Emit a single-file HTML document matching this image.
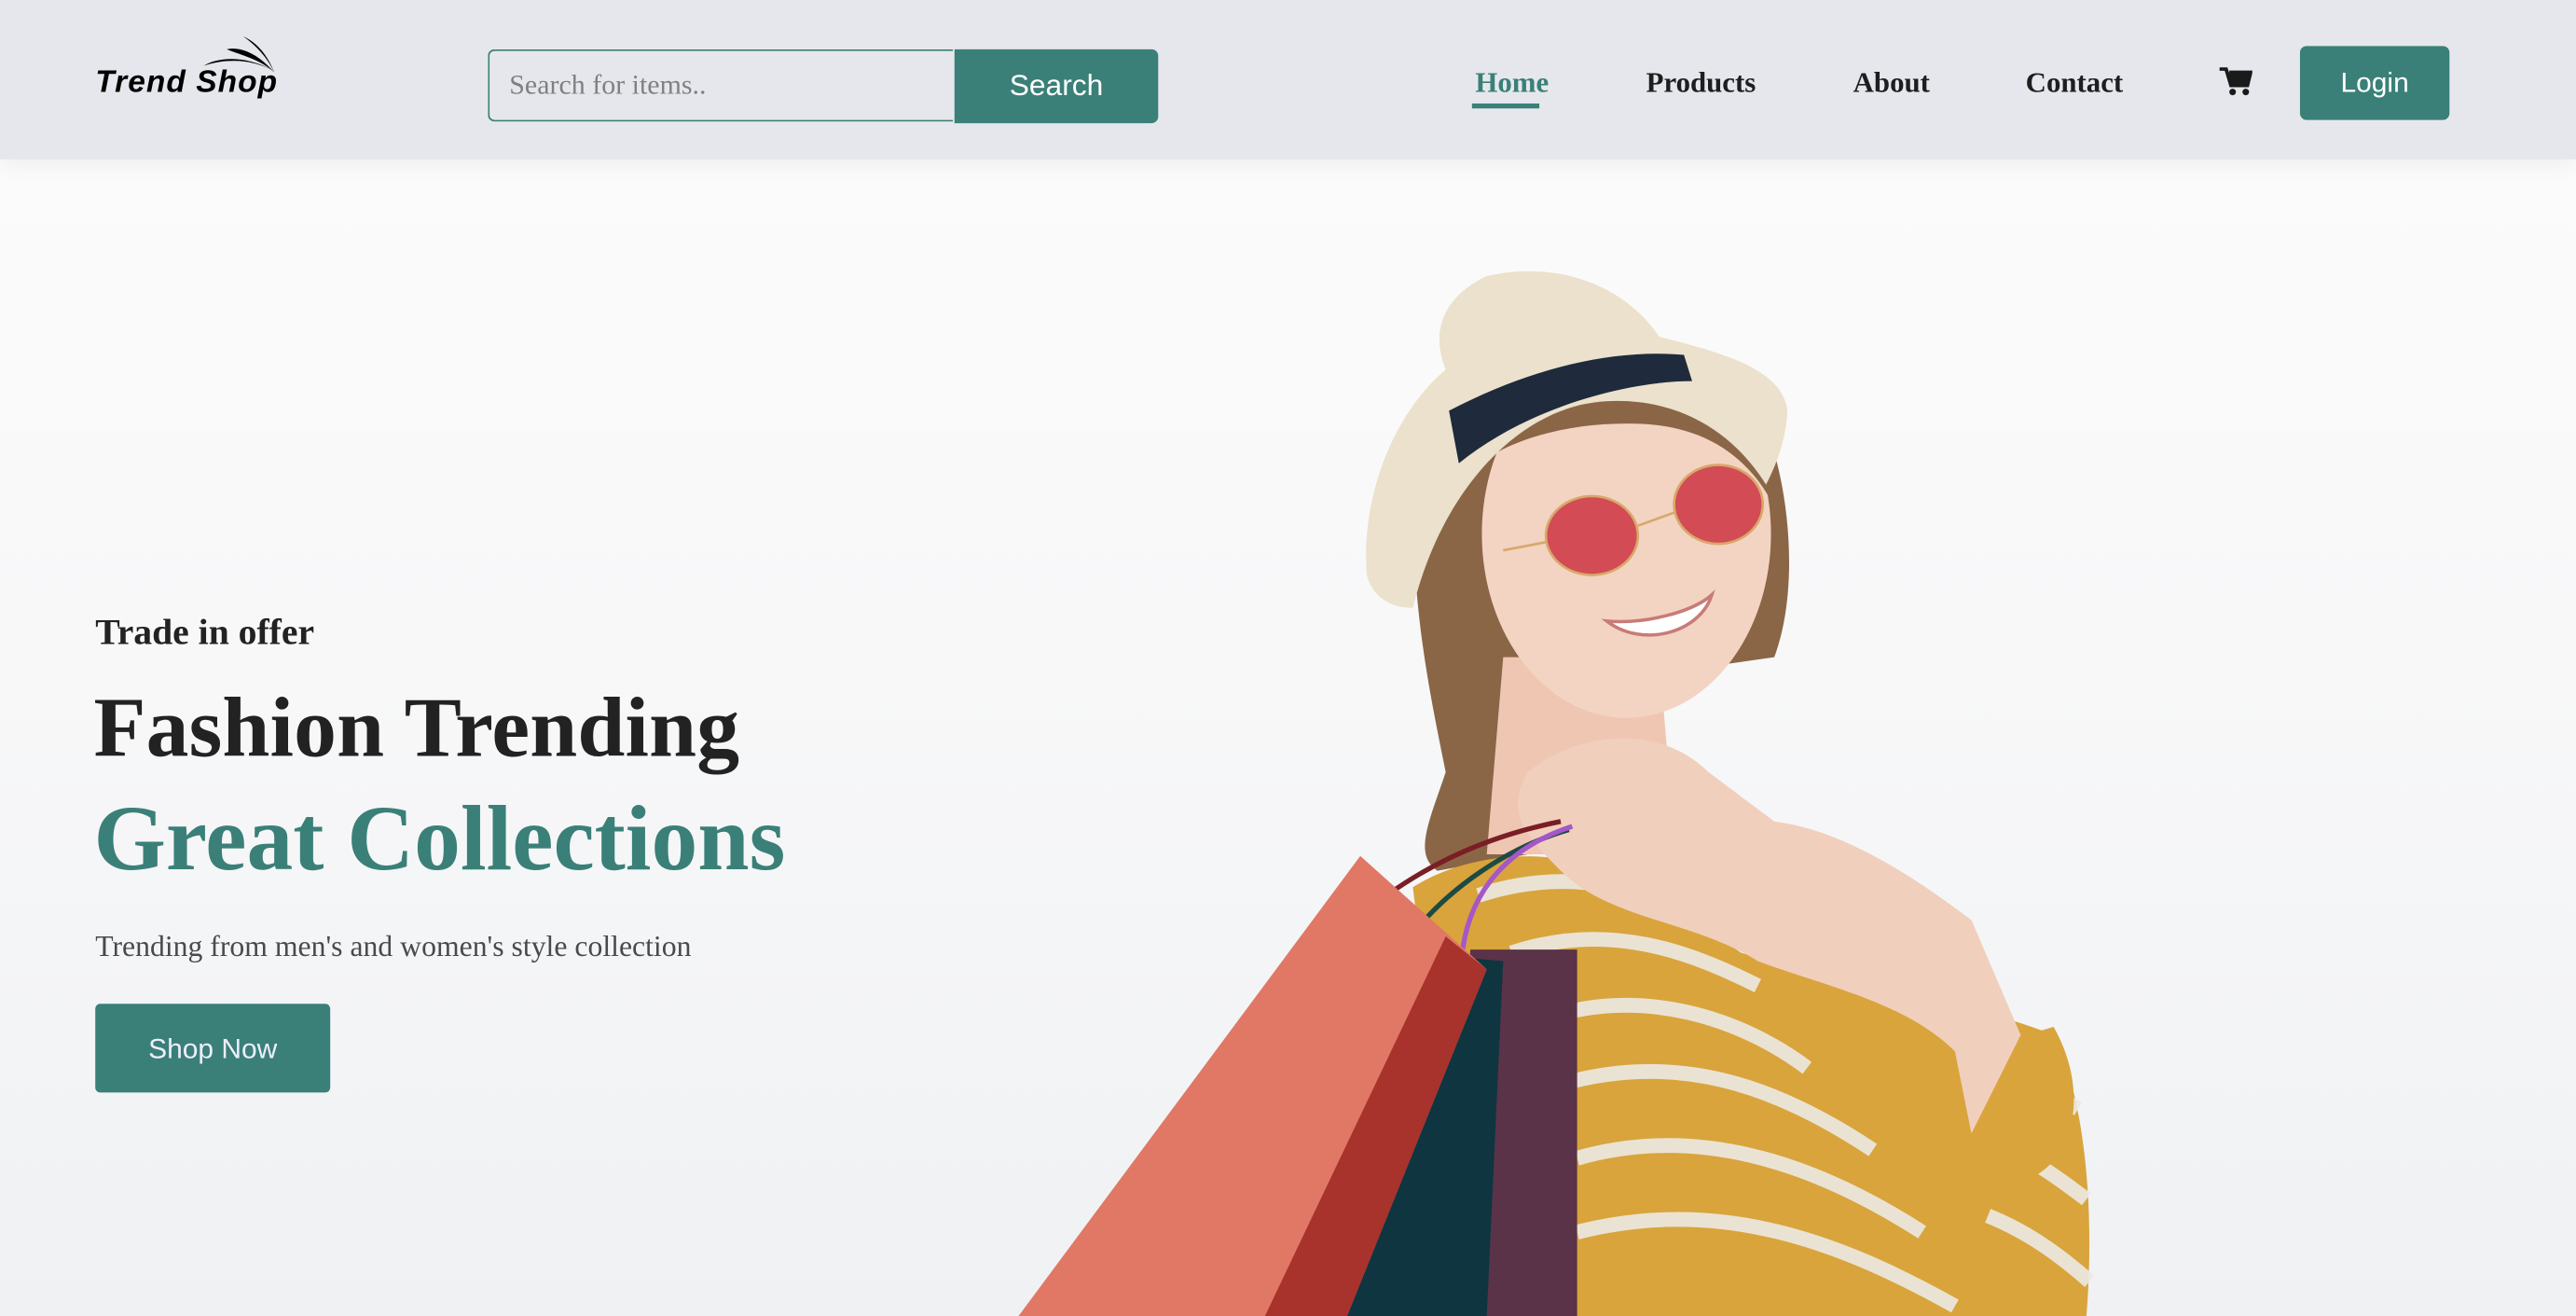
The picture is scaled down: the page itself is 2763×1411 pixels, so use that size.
<!DOCTYPE html>
<html><head><meta charset="utf-8"><style>
html,body{margin:0;padding:0;width:2763px;height:1411px;overflow:hidden;background:#f7f8f9;}
#s{position:absolute;left:0;top:0;width:1568px;height:801px;transform-origin:0 0;transform:scale(1.7621,1.7615);
background:linear-gradient(180deg,#fcfcfc 0%,#f8f8f9 50%,#eff1f3 100%);overflow:hidden;}
.hdr{position:absolute;left:0;top:0;width:1568px;height:97px;background:#e6e7ec;box-shadow:0 4px 12px rgba(0,0,0,0.05);z-index:3}
.a{position:absolute;white-space:nowrap}
.serif{font-family:"Liberation Serif",serif}
.sans{font-family:"Liberation Sans",sans-serif}
.nav{font-family:"Liberation Serif",serif;font-weight:bold;font-size:17.5px;color:#1e1e1e;top:40px}
</style></head><body><div id="s">
<div class="hdr">
  <div class="a sans" style="left:58px;top:40px;font-size:19px;font-weight:bold;font-style:italic;letter-spacing:0.6px;color:#000">Trend Shop</div>
  <svg class="a" style="left:118px;top:20px" width="54" height="28" viewBox="0 0 54 28">
    <path d="M6 20 C16 14 34 14 50 24 C40 18 24 14 6 20Z" fill="#000"/>
    <path d="M20 10 C30 14 40 16 49 24 C40 14 30 8 20 10Z" fill="#000"/>
    <path d="M30 2 C38 8 44 14 49 24 C44 12 38 6 30 2Z" fill="#000"/>
  </svg>
  <div class="a" style="left:297px;top:30px;width:282px;height:42px;border:1.5px solid #3a8078;border-right:none;border-radius:4px 0 0 4px;background:#e6e7ec"></div>
  <div class="a serif" style="left:310px;top:42px;font-size:17px;color:#808080">Search for items..</div>
  <div class="a sans" style="left:581px;top:30px;width:124px;height:45px;background:#3a8078;border-radius:0 4px 4px 0;color:#fff;font-size:18px;line-height:45px;text-align:center">Search</div>
  <div class="a nav" style="left:898px;color:#3a8078">Home</div>
  <div class="a" style="left:896px;top:63px;width:41px;height:2.5px;background:#3a8078"></div>
  <div class="a nav" style="left:1002px">Products</div>
  <div class="a nav" style="left:1128px">About</div>
  <div class="a nav" style="left:1233px">Contact</div>
  <svg class="a" style="left:1351px;top:41px" width="20" height="18" viewBox="0 0 20 18">
    <path d="M0 1 H4 L7 11 H17 L19 3 H6" fill="none" stroke="#1a1a1a" stroke-width="2.2"/>
    <path d="M5.5 3 H19 L17 11 H7Z" fill="#1a1a1a"/>
    <circle cx="8" cy="15" r="2" fill="#1a1a1a"/><circle cx="16" cy="15" r="2" fill="#1a1a1a"/>
  </svg>
  <div class="a sans" style="left:1400px;top:28px;width:91px;height:45px;background:#3a8078;border-radius:4px;color:#fff;font-size:17px;line-height:45px;text-align:center">Login</div>
</div>

<svg class="a" style="left:0;top:0" width="1568" height="801" viewBox="0 0 1568 801">
  <path d="M868 260 C850 330 870 420 880 470 C870 500 860 520 875 530 L930 520 L940 420 L1080 400 C1095 360 1090 300 1075 260Z" fill="#8a6647"/>
  <path d="M915 400 L1010 400 L1020 520 L905 520Z" fill="#eec6b2"/>
  <path d="M860 540 C900 515 960 515 1000 540 L1060 580 C1130 600 1200 610 1250 630 C1270 670 1275 740 1270 801 L940 801 L880 700Z" fill="#d9a43c"/>
  <g stroke="#eceae4" stroke-width="9" fill="none" opacity="0.9">
    <path d="M900 545 C960 525 1010 545 1040 560"/>
    <path d="M920 580 C980 560 1030 580 1070 600"/>
    <path d="M940 620 C1000 600 1060 620 1100 650"/>
    <path d="M950 660 C1020 640 1080 660 1140 700"/>
    <path d="M960 705 C1030 685 1100 705 1170 750"/>
    <path d="M960 750 C1040 730 1110 750 1190 795"/>
    <path d="M1180 640 C1210 650 1240 660 1265 675"/>
    <path d="M1200 690 C1230 700 1250 715 1270 730"/>
    <path d="M1210 740 C1235 750 1255 765 1272 780"/>
  </g>
  <path d="M1070 600 L1170 585 L1200 640 L1250 625 C1270 660 1265 700 1240 715 L1200 700 Z" fill="#d9a43c"/>
  <path d="M930 470 C960 445 1010 440 1040 470 L1080 500 C1120 505 1160 530 1200 560 L1230 630 L1200 690 L1190 640 C1160 610 1110 600 1070 585 C1030 560 980 560 950 530 C930 510 915 495 930 470Z" fill="#f1cfbd"/>
  <ellipse cx="990" cy="325" rx="88" ry="112" fill="#f3d3c2"/>
  <path d="M880 300 C890 250 960 225 1010 230 C1060 235 1085 270 1085 320 C1070 280 1040 260 1000 258 C950 256 905 270 880 300Z" fill="#8a6647"/>
  <path d="M832 350 C828 300 850 250 880 225 C870 200 880 180 905 168 C950 158 990 175 1010 205 C1050 215 1085 225 1088 250 C1087 270 1080 285 1075 295 C1050 255 1010 240 970 245 C930 250 880 290 860 370 C845 370 835 362 832 350Z" fill="#ebe1cc"/>
  <path d="M882 250 C930 225 980 212 1025 216 L1030 232 C990 232 930 248 888 282Z" fill="#1f2a3c"/>
  <ellipse cx="969" cy="326" rx="28" ry="24" fill="#d24b55" stroke="#d8a86a" stroke-width="1.5"/>
  <ellipse cx="1046" cy="307" rx="27" ry="24" fill="#d24b55" stroke="#d8a86a" stroke-width="1.5"/>
  <path d="M997 320 L1019 312" stroke="#d8a86a" stroke-width="1.5"/>
  <path d="M941 330 L915 335" stroke="#d8a86a" stroke-width="1.5"/>
  <path d="M978 378 C1000 380 1030 373 1042 362 C1035 385 1000 395 978 378Z" fill="#fff" stroke="#c87b78" stroke-width="2"/>
  <path d="M825 560 C860 530 900 510 950 500" stroke="#7a1e26" stroke-width="3" fill="none"/>
  <path d="M855 575 C880 540 920 515 955 505" stroke="#1e4a44" stroke-width="3" fill="none"/>
  <path d="M890 580 C895 540 920 515 957 503" stroke="#a557c9" stroke-width="3" fill="none"/>
  <path d="M895 578 L960 578 L960 801 L882 801Z" fill="#5a3348"/>
  <path d="M860 580 L915 585 L905 801 L815 801Z" fill="#0f3540"/>
  <path d="M828 521 L905 590 L820 801 L620 801Z" fill="#e07865"/>
  <path d="M905 590 L820 801 L770 801 L880 570Z" fill="#a8322c"/>
</svg>

<div class="a serif" style="left:58px;top:372px;font-size:22.5px;font-weight:bold;color:#222">Trade in offer</div>
<div class="a serif" style="left:57px;top:414px;font-size:52px;font-weight:bold;letter-spacing:0.1px;color:#222">Fashion Trending</div>
<div class="a serif" style="left:57px;top:479px;font-size:56.5px;font-weight:bold;color:#3a8078">Great Collections</div>
<div class="a serif" style="left:58px;top:566px;font-size:18px;color:#4a4a4a">Trending from men's and women's style collection</div>
<div class="a sans" style="left:58px;top:611px;width:143px;height:54px;background:#3a8078;border-radius:3px;color:#eef;font-size:17px;line-height:56px;text-align:center">Shop Now</div>
</div></body></html>
